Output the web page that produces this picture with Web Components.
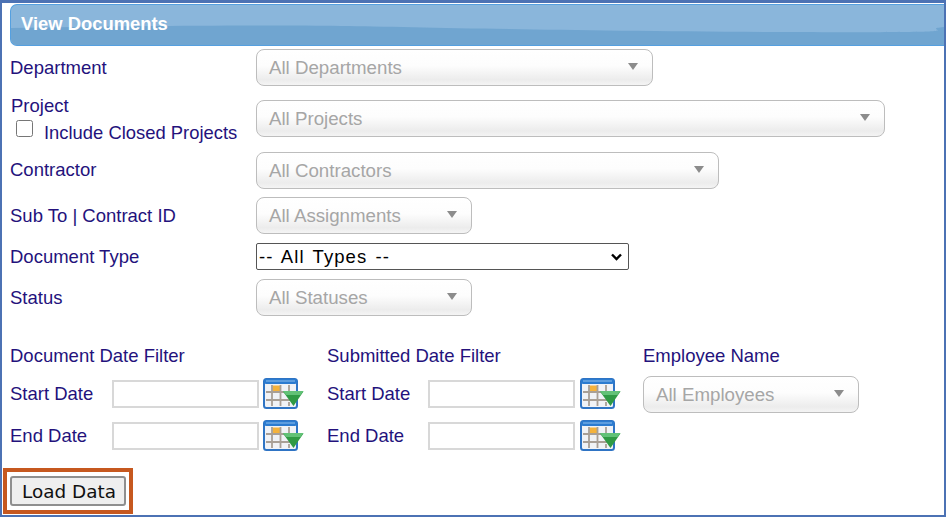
<!DOCTYPE html>
<html>
<head>
<meta charset="utf-8">
<title>View Documents</title>
<style>
  html, body { margin: 0; padding: 0; background: #fff; }
  body { font-family: "Liberation Sans", Arial, sans-serif; }
</style>
</head>
<body>
<doc-page>
  <panel-header>View Documents</panel-header>

  <doc-row style="margin-top:3px">
    <span>Department</span>
    <fake-select slot="control" width="397" text="All Departments"></fake-select>
  </doc-row>
  <doc-row style="margin-top:14px">
    <project-label>Project</project-label>
    <fake-select slot="control" width="629" text="All Projects"></fake-select>
  </doc-row>
  <doc-row style="margin-top:15px">
    <span style="display:inline-block;padding-bottom:2px">Contractor</span>
    <fake-select slot="control" width="463" text="All Contractors"></fake-select>
  </doc-row>
  <doc-row style="margin-top:8px">
    <span>Sub To | Contract ID</span>
    <fake-select slot="control" width="216" text="All Assignments"></fake-select>
  </doc-row>
  <doc-row style="margin-top:9px">
    <span>Document Type</span>
    <type-select slot="control"></type-select>
  </doc-row>
  <doc-row style="margin-top:9px">
    <span>Status</span>
    <fake-select slot="control" width="216" text="All Statuses"></fake-select>
  </doc-row>

  <filter-grid>
    <date-filter title="Document Date Filter"></date-filter>
    <date-filter title="Submitted Date Filter" style="--name-width:101px;--field-gap:5px"></date-filter>
    <employee-filter></employee-filter>
  </filter-grid>

  <load-button>Load Data</load-button>
</doc-page>

<script>
class DocPage extends HTMLElement {
  constructor() {
    super();
    this.attachShadow({ mode: "open" }).innerHTML = `
      <style>
      :host {
        display: flex;
        flex-direction: column;
        box-sizing: border-box;
        width: 946px;
        height: 517px;
        overflow: hidden;
        border: solid #4c72b4;
        border-width: 3px 2px 2px 2px;
        background: #fff;
        color: #24127c;
        font: 18.5px/27px "Liberation Sans", Arial, sans-serif;
      }
      </style>
      <slot></slot>
    `;
  }
}

class PanelHeader extends HTMLElement {
  constructor() {
    super();
    this.attachShadow({ mode: "open" }).innerHTML = `
      <style>
      :host {
        position: relative;
        display: flex;
        align-items: center;
        flex: none;
        box-sizing: border-box;
        height: 42px;
        margin: 1px 0 0 8px;
        padding: 0 0 3px 10px;
        overflow: hidden;
        border: solid #55a0e0;
        border-width: 1.5px 0 1.5px 1.5px;
        border-radius: 7px 0 0 7px;
        background: #8ab6db;
        color: #fff;
        font: bold 18.4px "Liberation Sans", Arial, sans-serif;
      }
      svg { position: absolute; left: 0; top: 0; width: 100%; height: 100%; }
      span { position: relative; }
      </style>
      <svg viewBox="0 0 934 40" preserveAspectRatio="none">
        <path d="M0 23 C120 21 250 20 330 21 S 540 26 770 27 S 900 25 934 22 V40 H0Z" fill="#70a5d0"/>
      </svg>
      <span><slot></slot></span>
    `;
  }
}

class DocRow extends HTMLElement {
  constructor() {
    super();
    this.attachShadow({ mode: "open" }).innerHTML = `
      <style>
      :host {
        display: flex;
        align-items: center;
        margin-left: 8px;
      }
      .label { flex: 0 0 246px; }
      </style>
      <div class="label"><slot></slot></div>
      <slot name="control"></slot>
    `;
  }
}

class ProjectLabel extends HTMLElement {
  constructor() {
    super();
    this.attachShadow({ mode: "open" }).innerHTML = `
      <style>
      :host { display: block; margin: -8px 0 -9px; }
      .project { padding-left: 1px; }
      .check {
        display: flex;
        align-items: center;
        white-space: nowrap;
      }
      input {
        width: 17px;
        height: 17px;
        margin: -9px 11px 0 6px;
      }
      .text { font-size: 18.4px; }
      </style>
      <div class="project"><slot></slot></div>
      <label class="check"><input type="checkbox"><span class="text">Include Closed Projects</span></label>
    `;
  }
}

class FakeSelect extends HTMLElement {
  constructor() {
    super();
    this.attachShadow({ mode: "open" }).innerHTML = `
      <style>
      :host {
        display: flex;
        align-items: center;
        justify-content: space-between;
        box-sizing: border-box;
        height: 37px;
        padding: 0 14px 0 12px;
        border: 1.5px solid #bdbdbd;
        border-radius: 8px;
        background: linear-gradient(#fff 0, #fdfdfd 45%, #ececec 85%, #f4f4f4 100%);
        color: #a6a6a6;
        font: 18.7px "Liberation Sans", Arial, sans-serif;
        white-space: nowrap;
      }
      .arrow {
        width: 0;
        height: 0;
        margin-bottom: 2px;
        border: solid transparent;
        border-width: 7px 5.5px 0;
        border-top-color: #8c8c8c;
      }
      </style>
      <span class="text"></span><span class="arrow"></span>
    `;
  }

  connectedCallback() {
    this.style.width = this.getAttribute("width") + "px";
    this.shadowRoot.querySelector(".text").textContent = this.getAttribute("text");
  }
}

class TypeSelect extends HTMLElement {
  constructor() {
    super();
    this.attachShadow({ mode: "open" }).innerHTML = `
      <style>
      :host { display: block; position: relative; }
      select {
        display: block;
        box-sizing: border-box;
        width: 373px;
        height: 27px;
        padding: 0 0 0 2px;
        appearance: none;
        background: #fff;
        border: 1.5px solid #555;
        border-radius: 2px;
        color: #000;
        font: 18.5px "Liberation Sans", Arial, sans-serif;
        letter-spacing: 1.1px;
        word-spacing: 2px;
      }
      svg { position: absolute; right: 7px; top: 10px; pointer-events: none; }
      </style>
      <select><option>-- All Types --</option></select>
      <svg width="11" height="8" viewBox="0 0 11 8"><path d="M1 1.5L5.5 6L10 1.5" fill="none" stroke="#000" stroke-width="2.4"/></svg>
    `;
  }
}

class FilterGrid extends HTMLElement {
  constructor() {
    super();
    this.attachShadow({ mode: "open" }).innerHTML = `
      <style>
      :host {
        display: grid;
        grid-template-columns: 317px 316px 1fr;
        margin: 26px 0 0 8px;
      }
      </style>
      <slot></slot>
    `;
  }
}

class CalendarIcon extends HTMLElement {
  constructor() {
    super();
    this.attachShadow({ mode: "open" }).innerHTML = `
      <style>
      :host { display: block; width: 41px; height: 32px; }
      svg { display: block; }
      </style>
      <svg width="41" height="32" viewBox="0 0 41 32">
        <rect x="1" y="1" width="33" height="29" rx="2.5" fill="#f0f2f6" stroke="#2f74c4" stroke-width="2"/>
        <rect x="1" y="1" width="33" height="5" rx="2" fill="#2b7bd0"/>
        <path d="M3 3H32" stroke="#8fc0ee" stroke-width="1"/>
        <rect x="9.5" y="7.5" width="7.5" height="6" fill="#f4b23c"/>
        <path d="M3 14H24M3 22H28M9 7V28M17.5 7V28M26 7V13M26 24V28" stroke="#a89f96" stroke-width="1.8" fill="none"/>
        <path d="M20 13.5H40.5L30.5 28Z" fill="#2f9a44"/>
        <path d="M20 13H40.5L37.5 17H23Z" fill="#62c277"/>
      </svg>
    `;
  }
}

class DateFilter extends HTMLElement {
  constructor() {
    super();
    const heading = this.getAttribute("title");
    this.removeAttribute("title");
    const row = (name) => `
      <div class="row">
        <span class="name">${name}</span>
        <input type="text">
        <calendar-icon></calendar-icon>
      </div>`;
    this.attachShadow({ mode: "open" }).innerHTML = `
      <style>
      :host { display: block; }
      .heading { margin-bottom: 10px; white-space: nowrap; }
      .row {
        display: flex;
        align-items: center;
        height: 29px;
        margin-bottom: 13px;
      }
      .name { flex: 0 0 var(--name-width, 102px); }
      input {
        box-sizing: border-box;
        width: 147px;
        height: 28px;
        margin: 0 var(--field-gap, 4px) 0 0;
        border: 2px solid #d8d8d8;
        background: #fff;
      }
      </style>
      <div class="heading">${heading}</div>
      ${row("Start Date")}
      ${row("End Date")}
    `;
  }
}

class EmployeeFilter extends HTMLElement {
  constructor() {
    super();
    this.attachShadow({ mode: "open" }).innerHTML = `
      <style>
      :host { display: block; }
      .heading { margin-bottom: 7px; }
      </style>
      <div class="heading">Employee Name</div>
      <fake-select width="216" text="All Employees"></fake-select>
    `;
  }
}

class LoadButton extends HTMLElement {
  constructor() {
    super();
    this.attachShadow({ mode: "open" }).innerHTML = `
      <style>
      :host {
        display: block;
        flex: none;
        box-sizing: border-box;
        width: 130px;
        height: 46px;
        margin: 5px 0 0 1px;
        padding: 4px 0 0 3px;
        border: 4px solid #c6581f;
      }
      button {
        display: block;
        box-sizing: border-box;
        width: 116px;
        height: 30px;
        padding: 0 0 0 2px;
        border: 2px solid #8f8f8f;
        border-radius: 3px;
        background: #efefef;
        color: #111;
        font: 18.4px "DejaVu Sans", sans-serif;
      }
      </style>
      <button type="button"><slot></slot></button>
    `;
  }
}

customElements.define("doc-page", DocPage);
customElements.define("panel-header", PanelHeader);
customElements.define("doc-row", DocRow);
customElements.define("project-label", ProjectLabel);
customElements.define("fake-select", FakeSelect);
customElements.define("type-select", TypeSelect);
customElements.define("filter-grid", FilterGrid);
customElements.define("calendar-icon", CalendarIcon);
customElements.define("date-filter", DateFilter);
customElements.define("employee-filter", EmployeeFilter);
customElements.define("load-button", LoadButton);
</script>
</body>
</html>
